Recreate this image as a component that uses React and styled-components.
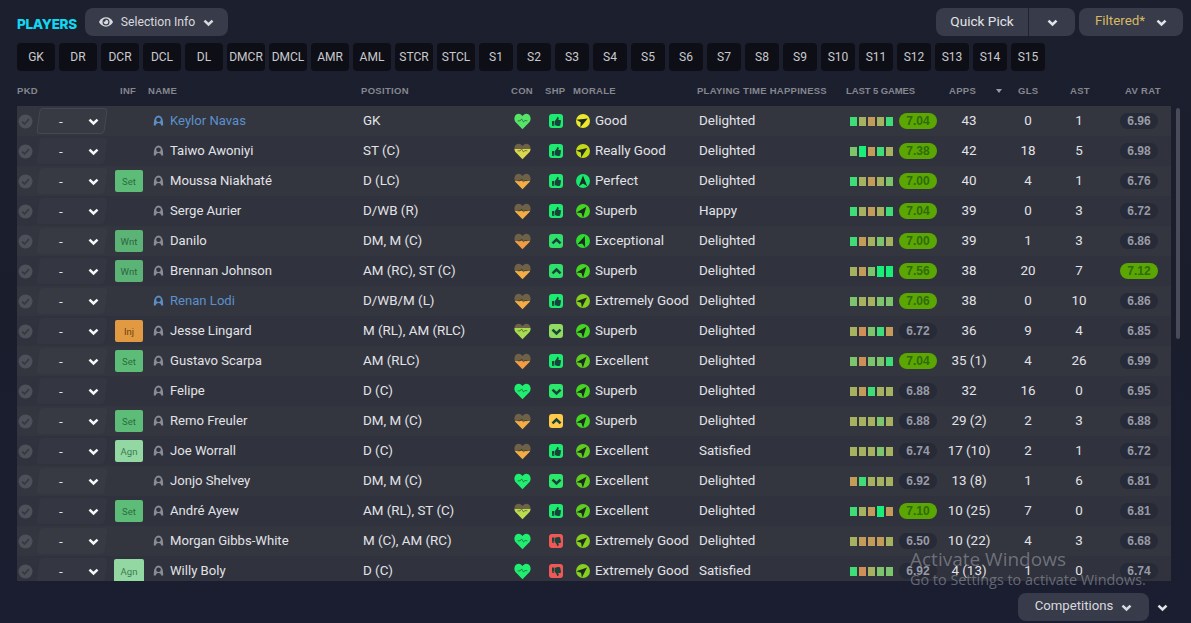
import React from "react";
import styled, { createGlobalStyle } from "styled-components";
import { FaEye, FaThumbsUp, FaThumbsDown } from "react-icons/fa";

const G = "#17ef78";
const L = "#3fdd78";
const M = "#7cc56c";
const O = "#a6b260";
const T = "#c39c5a";
const R = "#d18f58";

const positions = [
  "GK", "DR", "DCR", "DCL", "DL", "DMCR", "DMCL", "AMR", "AML", "STCR", "STCL",
  "S1", "S2", "S3", "S4", "S5", "S6", "S7", "S8", "S9", "S10", "S11", "S12", "S13", "S14", "S15",
];

const heartGreen = { color: "#20ee70", dim: 0 };
const heartOrange = { color: "#f5ac44", dim: 0.45 };

const players = [
  { name: "Keylor Navas", blue: true, pos: "GK", con: { color: "#55e468", dim: 0 }, shp: "up", morale: "Good", hap: "Delighted", form: [L, O, T, O, L], rat: "7.04", apps: "43", gls: "0", ast: "1", av: "6.96" },
  { name: "Taiwo Awoniyi", pos: "ST (C)", con: { color: "#dcd84c", dim: 0.35 }, shp: "up", morale: "Really Good", hap: "Delighted", form: [M, G, T, L, O], rat: "7.38", apps: "42", gls: "18", ast: "5", av: "6.98" },
  { name: "Moussa Niakhaté", inf: "Set", pos: "D (LC)", con: heartOrange, shp: "up", morale: "Perfect", hap: "Delighted", form: [L, O, T, O, M], rat: "7.00", apps: "40", gls: "4", ast: "1", av: "6.76" },
  { name: "Serge Aurier", pos: "D/WB (R)", con: heartOrange, shp: "up", morale: "Superb", hap: "Happy", form: [L, O, T, O, L], rat: "7.04", apps: "39", gls: "0", ast: "3", av: "6.72" },
  { name: "Danilo", inf: "Wnt", pos: "DM, M (C)", con: { color: "#f09c42", dim: 0.45 }, shp: "chevUp", morale: "Exceptional", hap: "Delighted", form: [L, T, O, M, O], rat: "7.00", apps: "39", gls: "1", ast: "3", av: "6.86" },
  { name: "Brennan Johnson", inf: "Wnt", pos: "AM (RC), ST (C)", con: heartOrange, shp: "chevUp", morale: "Superb", hap: "Delighted", form: [O, T, M, G, G], rat: "7.56", apps: "38", gls: "20", ast: "7", av: "7.12", avGood: true },
  { name: "Renan Lodi", blue: true, pos: "D/WB/M (L)", con: heartOrange, shp: "up", morale: "Extremely Good", hap: "Delighted", form: [M, O, O, M, M], rat: "7.06", apps: "38", gls: "0", ast: "10", av: "6.86" },
  { name: "Jesse Lingard", inf: "Inj", pos: "M (RL), AM (RLC)", con: { color: "#a8dc50", dim: 0.25 }, shp: "chevDown", morale: "Superb", hap: "Delighted", form: [O, R, M, L, T], rat: "6.72", apps: "36", gls: "9", ast: "4", av: "6.85" },
  { name: "Gustavo Scarpa", inf: "Set", pos: "AM (RLC)", con: { color: "#f59c42", dim: 0.45 }, shp: "up", morale: "Excellent", hap: "Delighted", form: [M, R, M, M, L], rat: "7.04", apps: "35 (1)", gls: "4", ast: "26", av: "6.99" },
  { name: "Felipe", pos: "D (C)", con: heartGreen, shp: "chevDownGreen", morale: "Superb", hap: "Delighted", form: [O, T, L, O, O], rat: "6.88", apps: "32", gls: "16", ast: "0", av: "6.95" },
  { name: "Remo Freuler", inf: "Set", pos: "DM, M (C)", con: heartOrange, shp: "chevUpAmber", morale: "Superb", hap: "Delighted", form: [O, O, O, M, O], rat: "6.88", apps: "29 (2)", gls: "2", ast: "3", av: "6.88" },
  { name: "Joe Worrall", inf: "Agn", pos: "D (C)", con: heartOrange, shp: "up", morale: "Excellent", hap: "Satisfied", form: [O, O, O, M, O], rat: "6.74", apps: "17 (10)", gls: "2", ast: "1", av: "6.72" },
  { name: "Jonjo Shelvey", pos: "DM, M (C)", con: heartGreen, shp: "chevDownGreen", morale: "Excellent", hap: "Delighted", form: [T, L, O, O, O], rat: "6.92", apps: "13 (8)", gls: "1", ast: "6", av: "6.81" },
  { name: "André Ayew", inf: "Set", pos: "AM (RL), ST (C)", con: { color: "#bcdc50", dim: 0.35 }, shp: "up", morale: "Excellent", hap: "Delighted", form: [L, O, T, G, T], rat: "7.10", apps: "10 (25)", gls: "7", ast: "0", av: "6.81" },
  { name: "Morgan Gibbs-White", pos: "M (C), AM (RC)", con: heartGreen, shp: "down", morale: "Extremely Good", hap: "Delighted", form: [O, T, T, T, O], rat: "6.50", apps: "10 (22)", gls: "4", ast: "3", av: "6.68" },
  { name: "Willy Boly", inf: "Agn", big: true, pos: "D (C)", con: heartGreen, shp: "down", morale: "Extremely Good", hap: "Satisfied", form: [L, R, O, M, M], rat: "6.92", apps: "4 (13)", gls: "1", ast: "0", av: "6.74" },
];

const moraleStyles = {
  Perfect: { color: "#18e86e", angle: 0 },
  Exceptional: { color: "#2edb2e", angle: 20 },
  Superb: { color: "#45d522", angle: 38 },
  Excellent: { color: "#5fcc20", angle: 40 },
  "Extremely Good": { color: "#86cf20", angle: 48 },
  "Really Good": { color: "#c3da18", angle: 55 },
  Good: { color: "#eee82a", angle: 62 },
};

const shpStyles = {
  up: "#1deb70",
  chevUp: "#2fe06a",
  chevDown: "#8fdc60",
  chevDownGreen: "#2be86a",
  chevUpAmber: "#ffc94a",
  down: "#f25757",
};

function Chevron({ size = 11, up }) {
  return (
    <svg width={size} height={size} viewBox="0 0 12 12" style={{ transform: up ? "rotate(180deg)" : "none" }}>
      <path d="M1.6 4 L6 8.2 L10.4 4" fill="none" stroke="currentColor" strokeWidth="2.8" />
    </svg>
  );
}

function CheckIcon() {
  return (
    <svg width="15" height="15" viewBox="0 0 15 15">
      <circle cx="7.5" cy="7.5" r="7" fill="#4e5059" />
      <path d="M4 7.6 L6.6 10 L11 5" fill="none" stroke="#363842" strokeWidth="1.8" />
    </svg>
  );
}

function PersonIcon({ blue }) {
  const color = blue ? "#5d8ec4" : "#8b8d96";
  return (
    <svg width="11" height="11" viewBox="0 0 11 11">
      <path d="M0.8 10.5 C0.8 7 1 1 5.5 0.6 C10 1 10.2 7 10.2 10.5 L8.2 10.5 C8 9 7.4 8 5.5 8 C3.6 8 3 9 2.8 10.5 Z" fill={color} />
      <circle cx="5.5" cy="4.8" r="2.3" fill="#2f313c" />
    </svg>
  );
}

const heartPath = "M8 15.4 L1.6 8.8 C-0.8 6 0.4 0.8 4.2 0.6 C5.8 0.5 7.2 1.4 8 2.8 C8.8 1.4 10.2 0.5 11.8 0.6 C15.6 0.8 16.8 6 14.4 8.8 Z";

function Heart({ id, color, dim }) {
  const cut = dim * 100;
  return (
    <svg width="17" height="17" viewBox="0 0 16 16">
      <defs>
        <linearGradient id={id} x1="0" y1="0" x2="0" y2="1">
          <stop offset={`${cut}%`} stopColor={dim ? "#6d6248" : color} />
          <stop offset={`${cut}%`} stopColor={color} />
        </linearGradient>
      </defs>
      <path d={heartPath} fill={`url(#${id})`} />
      <path d="M3.4 7.4 L5.8 7.4 L7.2 5.6 L9 8.6 L10.2 7 L12.6 7.4" fill="none" stroke="rgba(30,40,40,0.6)" strokeWidth="0.8" />
    </svg>
  );
}

function ShpIcon({ type }) {
  return (
    <ShpBox $color={shpStyles[type]}>
      {type === "up" && <FaThumbsUp size={9} />}
      {type === "down" && <FaThumbsDown size={9} />}
      {(type === "chevUp" || type === "chevUpAmber") && <Chevron size={11} up />}
      {(type === "chevDown" || type === "chevDownGreen") && <Chevron size={11} />}
    </ShpBox>
  );
}

function MoraleIcon({ morale }) {
  const { color, angle } = moraleStyles[morale];
  return (
    <MoraleCircle $color={color}>
      <svg width="14" height="14" viewBox="0 0 14 14" style={{ transform: `rotate(${angle}deg)` }}>
        <path d="M7 1.6 L11.2 12.2 L7 9.6 L2.8 12.2 Z" fill="#1d2a22" />
      </svg>
    </MoraleCircle>
  );
}

function PlayerRow({ player, index }) {
  return (
    <Row $odd={index % 2 === 0}>
      <CheckCell>
        <CheckIcon />
      </CheckCell>
      <PickSelect $outlined={index === 0}>
        <span>-</span>
        <Chevron size={11} />
      </PickSelect>
      <InfCell>{player.inf && <InfBadge $kind={player.inf} $big={player.big}>{player.inf}</InfBadge>}</InfCell>
      <NameCell $blue={player.blue}>
        <PersonIcon blue={player.blue} />
        <span>{player.name}</span>
      </NameCell>
      <TextCell $left={2}>{player.pos}</TextCell>
      <IconCell>
        <Heart id={`heart-${index}`} color={player.con.color} dim={player.con.dim} />
      </IconCell>
      <IconCell>
        <ShpIcon type={player.shp} />
      </IconCell>
      <MoraleCell>
        <MoraleIcon morale={player.morale} />
        <MoraleLabel>{player.morale}</MoraleLabel>
      </MoraleCell>
      <TextCell $left={0}>{player.hap}</TextCell>
      <FormCell>
        <FormBars>
          {player.form.map((color, i) => (
            <FormBar key={i} $color={color} $tall={color === G} />
          ))}
        </FormBars>
        <RatingPill $good={parseFloat(player.rat) >= 7}>{player.rat}</RatingPill>
      </FormCell>
      <NumberCell>{player.apps}</NumberCell>
      <NumberCell>{player.gls}</NumberCell>
      <NumberCell>{player.ast}</NumberCell>
      <AvCell>
        <RatingPill $good={player.avGood}>{player.av}</RatingPill>
      </AvCell>
    </Row>
  );
}

function App() {
  return (
    <Page>
      <GlobalStyle />
      <TopBar>
        <TitleGroup>
          <Title>PLAYERS</Title>
          <TopButton $width={143} $size={12.2}>
            <FaEye size={14} />
            <span>Selection Info</span>
            <Chevron size={11} />
          </TopButton>
        </TitleGroup>
        <TopRight>
          <QuickPick>
            <QuickLabel>Quick Pick</QuickLabel>
            <QuickArrow>
              <Chevron size={11} />
            </QuickArrow>
          </QuickPick>
          <FilterButton>
            <FilterLabel>Filtered*</FilterLabel>
            <Chevron size={11} />
          </FilterButton>
        </TopRight>
      </TopBar>
      <ChipRow>
        {positions.map((p) => (
          <Chip key={p} $small={/^S\d/.test(p)}>
            {p}
          </Chip>
        ))}
      </ChipRow>
      <HeaderRow>
        <HeaderCell $span={2}>PKD</HeaderCell>
        <HeaderCell $pad={12}>INF</HeaderCell>
        <HeaderCell>NAME</HeaderCell>
        <HeaderCell>POSITION</HeaderCell>
        <HeaderCell $pad={2}>CON</HeaderCell>
        <HeaderCell $pad={10}>SHP</HeaderCell>
        <HeaderCell $pad={-4}>MORALE</HeaderCell>
        <HeaderCell $pad={-2} $spacing={0.26}>PLAYING TIME HAPPINESS</HeaderCell>
        <HeaderCell $spacing={-0.1}>LAST 5 GAMES</HeaderCell>
        <HeaderCell $pad={8}>
          APPS
          <SortArrow />
        </HeaderCell>
        <HeaderCell $pad={21}>GLS</HeaderCell>
        <HeaderCell $pad={11}>AST</HeaderCell>
        <HeaderCell $pad={26}>AV RAT</HeaderCell>
      </HeaderRow>
      <TableArea>
        <RowsClip>
          {players.map((player, index) => (
            <PlayerRow key={player.name} player={player} index={index} />
          ))}
        </RowsClip>
        <ScrollThumb />
      </TableArea>
      <BottomBar>
        <TopButton $width={131} $size={13.2} $lift>
          <span>Competitions</span>
          <Chevron size={11} />
        </TopButton>
        <BottomArrow>
          <Chevron size={11} />
        </BottomArrow>
      </BottomBar>
      <Watermark>
        <WatermarkTitle>Activate Windows</WatermarkTitle>
        <WatermarkText>Go to Settings to activate Windows.</WatermarkText>
      </Watermark>
    </Page>
  );
}

const GlobalStyle = createGlobalStyle`
  html, body {
    margin: 0;
    padding: 0;
    background-color: #1b1e2d;
  }
`;

const GRID = "19px 72px 40px 213px 148px 26px 42px 122px 147px 95px 56px 62px 40px 72px";

const Page = styled.div`
  width: 1191px;
  height: 623px;
  position: relative;
  overflow: hidden;
  box-sizing: border-box;
  padding: 8px 8px 0 17px;
  background: linear-gradient(180deg, #1c1f2e 0%, #1a1d2c 50%, #1b1e30 100%);

  font-family: "Roboto", "Liberation Sans", sans-serif;
  font-size: 13.4px;
  color: #e2e3e7;
`;

const TopBar = styled.div`
  height: 28px;

  display: flex;
  justify-content: space-between;
  align-items: center;
`;

const TitleGroup = styled.div`
  display: flex;
  align-items: center;
`;

const Title = styled.div`
  width: 68px;
  padding-top: 4px;

  font-family: "Inter", sans-serif;
  font-size: 13.5px;
  font-weight: 800;
  letter-spacing: -0.3px;
  color: #10d8f2;
`;

const TopButton = styled.div`
  width: ${(props) => props.$width}px;
  height: 28px;
  box-sizing: border-box;

  display: flex;
  justify-content: center;
  align-items: center;
  gap: 8px;

  background-color: #383b49;
  border-radius: 8px;

  font-size: ${(props) => props.$size}px;
  color: #d8d9de;

  span {
    padding-bottom: ${(props) => (props.$lift ? "3px" : "0")};
  }
`;

const TopRight = styled.div`
  display: flex;
  gap: 4px;
`;

const QuickPick = styled.div`
  width: 139px;
  height: 28px;

  display: flex;

  background-color: #383b49;
  border-radius: 8px;
`;

const QuickLabel = styled.div`
  width: 93px;
  padding-bottom: 3px;
  box-sizing: border-box;

  display: flex;
  justify-content: center;
  align-items: center;

  border-right: 1px solid #20222e;
  font-size: 13.6px;
`;

const QuickArrow = styled.div`
  flex: 1;

  display: flex;
  justify-content: center;
  align-items: center;
`;

const FilterButton = styled.div`
  width: 104px;
  height: 28px;

  display: flex;
  justify-content: center;
  align-items: center;
  gap: 11px;

  background-color: #383b49;
  border-radius: 8px;

  color: #e2e3e7;
`;

const FilterLabel = styled.span`
  padding-bottom: 3px;

  font-size: 13.4px;
  color: #d6b964;
`;

const ChipRow = styled.div`
  height: 28px;
  margin-top: 7px;

  display: flex;
  gap: 4px;
`;

const Chip = styled.div`
  width: ${(props) => (props.$small ? "34px" : "38px")};
  height: 28px;
  flex-shrink: 0;

  display: flex;
  justify-content: center;
  align-items: center;

  background-color: #0e0f16;
  border-radius: 4px;

  font-size: 12px;
  color: #c9cace;
  white-space: nowrap;
`;

const HeaderRow = styled.div`
  height: 35px;
  box-sizing: border-box;
  padding-top: 4px;

  display: grid;
  grid-template-columns: ${GRID};
  align-items: center;
`;

const HeaderCell = styled.div`
  grid-column: span ${(props) => props.$span || 1};
  padding-left: ${(props) => Math.max(props.$pad || 0, 0)}px;
  margin-left: ${(props) => Math.min(props.$pad || 0, 0)}px;

  display: flex;
  align-items: center;

  font-family: "Liberation Sans", sans-serif;
  font-size: 9.5px;
  font-weight: 700;
  letter-spacing: ${(props) => (props.$spacing !== undefined ? props.$spacing : 0.3)}px;
  color: #85878f;
  white-space: nowrap;
`;

const SortArrow = styled.span`
  width: 0;
  height: 0;
  margin-left: 20px;

  border-left: 3.5px solid transparent;
  border-right: 3.5px solid transparent;
  border-top: 4px solid #9a9ba2;
`;

const TableArea = styled.div`
  display: flex;
  gap: 5px;
`;

const RowsClip = styled.div`
  width: 1154px;
  height: 475px;
  flex-shrink: 0;

  overflow: hidden;
`;

const ScrollThumb = styled.div`
  width: 4px;
  height: 231px;
  margin-top: 2px;

  background-color: #494b5b;
  border-radius: 2px;
`;

const Row = styled.div`
  height: 30px;

  display: grid;
  grid-template-columns: ${GRID};
  align-items: center;

  background-color: ${(props) => (props.$odd ? "#33353f" : "#30323d")};
`;

const CheckCell = styled.div`
  padding-left: 1px;

  display: flex;
`;

const PickSelect = styled.div`
  height: 26px;
  position: relative;
  box-sizing: border-box;
  padding: 0 9px 0 23px;

  display: flex;
  justify-content: space-between;
  align-items: center;

  svg {
    color: #f6f6f8;
  }

  &::before {
    content: "";
    position: absolute;
    inset: 0 2px 0 2px;
    transform: skewX(-8deg);
    background-color: rgba(255, 255, 255, 0.025);
    border-radius: 4px;
    border: 1px solid ${(props) => (props.$outlined ? "#454752" : "transparent")};
  }

  span, svg {
    position: relative;
  }
`;

const InfCell = styled.div`
  padding-left: 7px;
  height: 100%;

  display: flex;
  align-items: center;
`;

const badgeColors = {
  Set: { bg: "#5dbd78", text: "#2a6d42" },
  Wnt: { bg: "#5cb376", text: "#2a6640" },
  Inj: { bg: "#e19a42", text: "#6e4312" },
  Agn: { bg: "#93d8a2", text: "#3c7a52" },
};

const InfBadge = styled.div`
  width: ${(props) => (props.$big ? "30px" : "28px")};
  height: ${(props) => (props.$big ? "24px" : "22px")};
  margin-left: ${(props) => (props.$big ? "-1px" : "0")};

  display: flex;
  justify-content: center;
  align-items: center;

  background-color: ${(props) => badgeColors[props.$kind].bg};
  border-radius: 2px;

  font-size: 9.5px;
  color: ${(props) => badgeColors[props.$kind].text};
`;

const NameCell = styled.div`
  padding-left: 5px;
  padding-bottom: 2px;

  display: flex;
  align-items: center;
  gap: 6px;

  font-size: 13.1px;
  color: ${(props) => (props.$blue ? "#5c91cc" : "#e2e3e7")};
`;

const TextCell = styled.div`
  padding-left: ${(props) => props.$left}px;
  padding-bottom: 2px;
  white-space: nowrap;
`;

const IconCell = styled.div`
  display: flex;
  justify-content: center;
  align-items: center;
`;

const ShpBox = styled.div`
  width: 14px;
  height: 14px;

  display: flex;
  justify-content: center;
  align-items: center;

  background-color: ${(props) => props.$color};
  border-radius: 3px;
  color: #17443a;
`;

const MoraleCell = styled.div`
  margin-left: -1px;

  display: flex;
  align-items: center;
  gap: 5px;
  white-space: nowrap;
`;

const MoraleLabel = styled.span`
  padding-bottom: 2px;
`;

const MoraleCircle = styled.div`
  width: 14px;
  height: 14px;

  display: flex;
  justify-content: center;
  align-items: center;

  background-color: ${(props) => props.$color};
  border-radius: 50%;
`;

const FormCell = styled.div`
  padding-left: 4px;

  display: flex;
  align-items: center;
  gap: 6px;
`;

const FormBars = styled.div`
  height: 12px;

  display: flex;
  align-items: center;
  gap: 2px;
`;

const FormBar = styled.div`
  width: 7px;
  height: ${(props) => (props.$tall ? "11px" : "9px")};

  background-color: ${(props) => props.$color};
`;

const RatingPill = styled.div`
  width: 38px;
  height: 16px;

  display: flex;
  justify-content: center;
  align-items: center;

  background-color: ${(props) => (props.$good ? "#5ba602" : "#272a37")};
  border-radius: 8px;

  font-family: "Liberation Sans", sans-serif;
  font-size: 12px;
  font-weight: 700;
  color: ${(props) => (props.$good ? "#2f6b0c" : "#999ba6")};
`;

const NumberCell = styled.div`
  padding-bottom: 2px;

  text-align: center;
  white-space: nowrap;
`;

const AvCell = styled.div`
  padding-left: 21px;
`;

const BottomBar = styled.div`
  height: 28px;
  margin-top: 12px;

  display: flex;
  justify-content: flex-end;
  align-items: center;
  gap: 8px;
`;

const BottomArrow = styled.div`
  width: 11px;
  margin-right: 15px;

  display: flex;
`;

const Watermark = styled.div`
  position: absolute;
  left: 910px;
  top: 547px;

  font-family: "Open Sans", sans-serif;
  color: rgba(190, 192, 198, 0.45);
  pointer-events: none;
`;

const WatermarkTitle = styled.div`
  font-size: 19px;
  line-height: 24px;
`;

const WatermarkText = styled.div`
  font-size: 14.4px;
  line-height: 18px;
  white-space: nowrap;
`;

export default App;
